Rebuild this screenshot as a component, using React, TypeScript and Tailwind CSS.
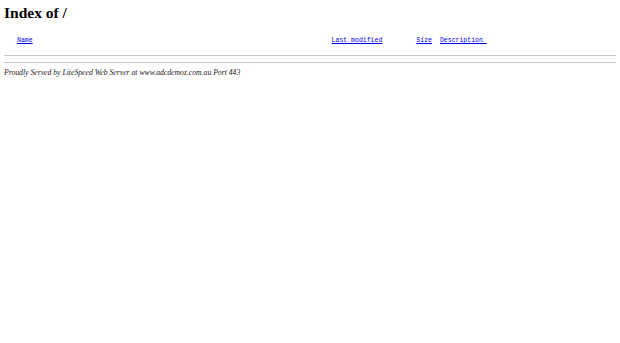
import React from 'react';

export default function App() {
  return (
    <main className="min-h-[343px] bg-white px-1 text-black font-['Liberation_Serif','Times_New_Roman',serif]">
      <h1 className="pt-[3px] text-[15.5px] font-bold leading-[20px]">Index of /</h1>

      {/* column headers */}
      <div className="mt-[14px] flex font-['Liberation_Mono','Courier_New',monospace] text-[6.5px] leading-[8px] text-[#0000ee]">
        <a href="#" className="ml-[13px] underline">Name</a>
        <a href="#" className="ml-[299px] underline">Last modified</a>
        <a href="#" className="ml-[34px] underline">Size</a>
        <a href="#" className="ml-[8px] whitespace-pre underline">Description </a>
      </div>

      <hr className="mt-[10px] border-0 border-t-[1.5px] border-[#c8c8c8]" />
      <hr className="mt-[6px] border-0 border-t-[1.5px] border-[#c8c8c8]" />

      <p className="mt-[5px] text-[7.7px] italic leading-[10px] text-[#222]">
        Proudly Served by LiteSpeed Web Server at www.adcdemoz.com.au Port 443
      </p>
    </main>
  );
}
